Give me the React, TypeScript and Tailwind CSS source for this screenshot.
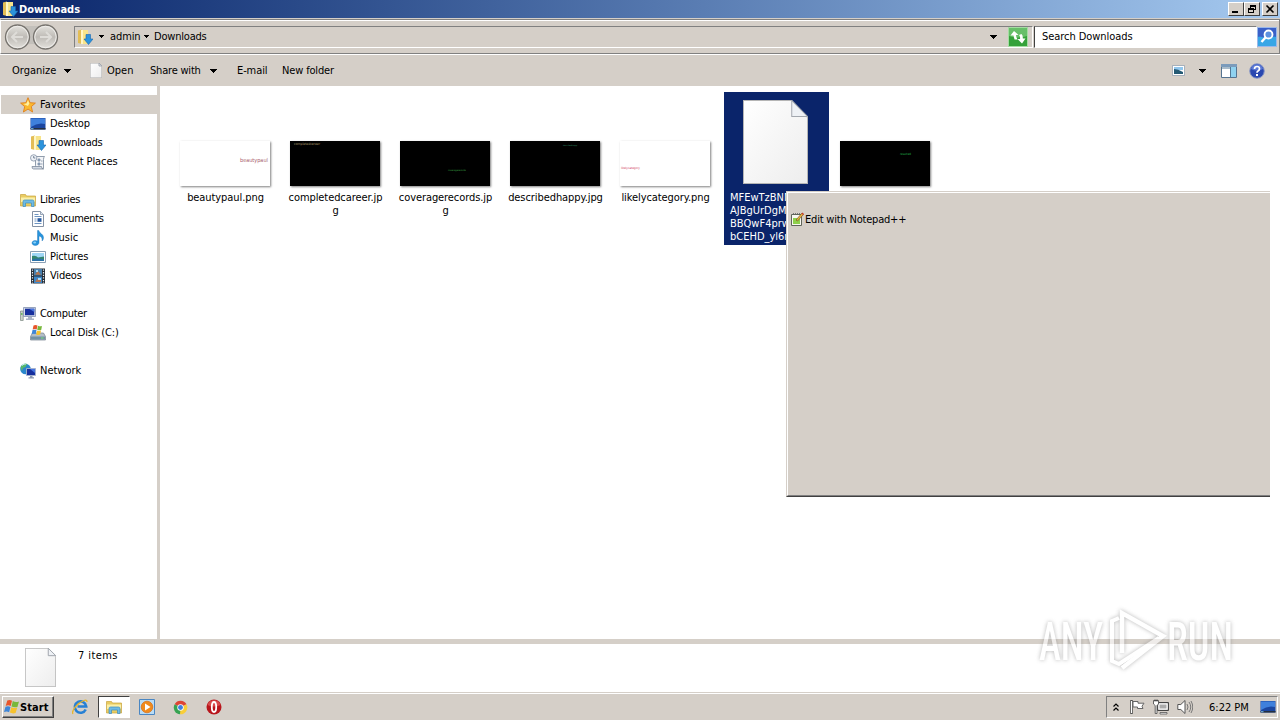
import type { ReactNode } from 'react';
import clsx from 'clsx';

interface IconProps {
  className?: string;
}

interface NavItem {
  label: string;
  icon: ReactNode;
  child?: boolean;
  selected?: boolean;
  textClass?: string;
}

interface FileItem {
  lines: string[];
  dark?: boolean;
  mark?: string;
  markClass?: string;
}

function DownloadsIcon({ className = 'size-4' }: IconProps) {
  return (
    <svg viewBox="0 0 16 16" className={className}>
      <path d="M1 1.500 5 .5V15l-4-1z" fill="#e3bd55" />
      <path d="M4 1h7v14H4z" fill="#f8e48a" />
      <path d="M4 1h2v14H4z" fill="#fdf6c8" />
      <path d="M9 5.500h4.500v4.500H16l-4.500 5.500L7 10h2z" fill="#2b93dc" stroke="#1667b0" strokeWidth=".6" />
    </svg>
  );
}

function FolderIcon({ className = 'size-4' }: IconProps) {
  return (
    <svg viewBox="0 0 16 16" className={className}>
      <path d="M.5 2.500h5l1 1.500h9v10H.5z" fill="#e9cc62" stroke="#c9a43e" strokeWidth=".7" />
      <path d="M1 5.500h14V10H1z" fill="#fbf0a8" />
      <path d="M3 14.500V9.500q0-1.500 1.500-1.500h8q1.500 0 1.500 1.500v5h-2.500V11h-6v3.500z" fill="#6fbbe4" stroke="#3c8cc0" strokeWidth=".7" />
    </svg>
  );
}

function StarIcon() {
  return (
    <svg viewBox="0 0 16 16" className="size-4">
      <path d="m8 .7 2.100 5 5.300.4-4.100 3.500 1.300 5.400L8 12.100 3.400 15l1.300-5.400L.6 6.100l5.300-.4z" fill="#fbb92f" stroke="#e0801c" strokeWidth=".9" />
      <path d="m8 3 1.300 3.500L8 9 3.500 7l3-.6z" fill="#fff0a0" />
    </svg>
  );
}

function DesktopIcon({ className = 'size-4' }: IconProps) {
  return (
    <svg viewBox="0 0 16 16" className={className}>
      <path d="M.5 2h15v11.500H.5z" fill="#1b46a0" />
      <path d="M1 2.500h14V8Q8 6 1 11z" fill="#3f80dc" />
      <path d="M.5 12h15v1.500H.5z" fill="#26303f" />
      <path d="M1 12.200h2.500v1H1z" fill="#7ac0f0" />
    </svg>
  );
}

function RecentIcon() {
  return (
    <svg viewBox="0 0 16 16" className="size-4">
      <path d="M5.500 2.500h9q-1 1-1 3v9H4q1.500-.8 1.500-3z" fill="#f3f5f8" stroke="#8592a3" strokeWidth=".9" />
      <path d="M2 12.500h9.500q0 2.500 2 2.500H3.500Q2 15 2 12.500z" fill="#d3dae3" stroke="#7d8a9c" strokeWidth=".8" />
      <path d="M8 5h2v2H8zm3 2h1.500M8 9h2v2H8zM11 10h1.500" fill="#a8bcd4" stroke="#6b7f98" strokeWidth=".7" />
      <circle cx="3.700" cy="3.900" r="3.200" fill="#eef2f7" stroke="#8d9aab" strokeWidth=".9" />
      <path d="M3.700 2v2h1.600" fill="none" stroke="#596a80" strokeWidth=".8" />
    </svg>
  );
}

function DocumentIcon() {
  return (
    <svg viewBox="0 0 16 16" className="size-4">
      <path d="M2.500.5h8l3 3v12h-11z" fill="#fff" stroke="#8391a5" />
      <path d="M10.500.5v3h3" fill="#dce5ef" stroke="#8391a5" strokeWidth=".8" />
      <path d="M4.500 3.500h4M4.500 5.500h7M4.500 12.500h7M4.500 8h2m-2 2h2" stroke="#6e95c2" />
      <path d="M7.500 7.200h4v3.600h-4z" fill="#285aa0" />
    </svg>
  );
}

function MusicIcon() {
  return (
    <svg viewBox="0 0 16 16" className="size-4">
      <path d="M7.500.5h1.300c.5 3 4.700 3.500 4.700 7 0 1.500-.5 2.700-1.500 3.500.7-3-1-4.500-3-5v6.500c0 1.800-1.700 3-3.700 3-1.800 0-3.300-1-3.300-2.500S3.500 10.500 5 10.500c1 0 1.700.2 2.500.6z" fill="#2794dc" stroke="#1a72b8" strokeWidth=".4" />
      <ellipse cx="4.700" cy="12.500" rx="1.500" ry=".9" fill="#8ad0f8" />
    </svg>
  );
}

function PictureIcon({ className = 'size-4' }: IconProps) {
  return (
    <svg viewBox="0 0 16 16" className={className}>
      <path d="M.5 2.500h15v11H.5z" fill="#fff" stroke="#8ba0b5" />
      <path d="M2 4h12v8H2z" fill="#9fd6f5" />
      <path d="M2 7q4-1 6 1.500L14 7.500V12H2z" fill="#33856f" />
      <path d="M2 10.500q6-2 12 0V12H2z" fill="#2a71a8" />
    </svg>
  );
}

function VideoIcon() {
  return (
    <svg viewBox="0 0 16 16" className="size-4">
      <path d="M1 .5h14v15H1z" fill="#242c35" />
      <path d="M4 1h8v6.500H4z" fill="#477fae" />
      <path d="M4 8.500h8V15H4z" fill="#3a85c8" />
      <path d="M5 6.500 8 3l3 4zM5 14l3-4 3 2v2z" fill="#b5754e" />
      <path d="M6 2h2v2H6zm2 8h3v2H8z" fill="#a9d8f4" />
      <path d="M2.500 1.500v14M13.500 1.500v14" stroke="#e4eaf0" strokeWidth="1.200" strokeDasharray="1.300 1.300" />
    </svg>
  );
}

function ComputerIcon() {
  return (
    <svg viewBox="0 0 16 16" className="size-4">
      <path d="M.5 5h2.700v9.500H.5z" fill="#cbd2cc" stroke="#7d8a83" strokeWidth=".7" />
      <path d="M1.200 7h1.200v2H1.200z" fill="#58b450" />
      <path d="M3.500 1.500h12v9h-12z" fill="#d4dae8" stroke="#8290ae" strokeWidth=".8" />
      <path d="M5 2.700h9.300v6.500H5z" fill="#162f9e" />
      <path d="M9 2.700h5.300V6z" fill="#4976dd" />
      <path d="M8 11h4v1.500h2V14H6v-1.500h2z" fill="#aab4c8" />
    </svg>
  );
}

function WindowsFlag({ className = 'size-4' }: IconProps) {
  return (
    <svg viewBox="0 0 16 16" className={className}>
      <path d="M3.300 1.500Q5.700.2 8 1.700L6.700 7Q4.300 5.700 1.700 6.900z" fill="#e8552b" />
      <path d="M8.800 2q2.700 1.800 6.200.5l-1.600 5.400q-2.800 1-5.900-.4z" fill="#78b83c" />
      <path d="M1.500 7.700q2.700-1.100 5 .2l-1.400 5.300q-2.300-1.300-5.100-.2z" fill="#3e86d8" />
      <path d="M7.300 8.300q2.800 1.400 5.900.4l-1.600 5.300q-2.800 1-5.700-.4z" fill="#f6c22e" />
    </svg>
  );
}

function DiskIcon() {
  return (
    <svg viewBox="0 0 16 16" className="size-4">
      <path d="M2.500 8h11l2 3.500v3.500H.5v-3.500z" fill="#b3bdc8" stroke="#74808c" strokeWidth=".7" />
      <path d="M1 11.500h14v3H1z" fill="#7391a4" />
      <path d="M11 12.500h2.500v1H11z" fill="#79e070" />
      <path d="M3.500.5q2-1 4 0l-.8 4q-2-.8-4 0z" fill="#e8552b" />
      <path d="M8 .8q2 1 4 .2l-.8 4q-2 .8-4-.2z" fill="#78b83c" />
      <path d="M2.500 5.100q2-.8 4 0l-.8 4q-2-.8-4 0z" fill="#3e86d8" />
      <path d="M7 5.400q2 1 4 .2l-.8 4q-2 .8-4-.2z" fill="#f6c22e" />
    </svg>
  );
}

function NetworkIcon() {
  return (
    <svg viewBox="0 0 16 16" className="size-4">
      <circle cx="5.500" cy="6" r="5.300" fill="#2a86cc" />
      <path d="M1.200 3q3-3.500 6-2L5.500 4 3 5 2 8Q0 5 1.200 3zM6 7l3-1v4l-3 1z" fill="#58b86a" />
      <path d="M2 2.500q2-2 4-1.500" stroke="#c8ecf6" fill="none" />
      <path d="M6.500 5.500h9v7h-9z" fill="#162f9e" stroke="#a8b4ce" strokeWidth=".9" />
      <path d="M10 6h5v4z" fill="#4474e0" />
      <path d="M10 13h2.500v1.200H14v1.300H8.500v-1.300H10z" fill="#8d9ab2" />
    </svg>
  );
}

function PageIcon({ className }: IconProps) {
  return (
    <svg viewBox="0 0 66 84" preserveAspectRatio="none" className={className}>
      <defs>
        <linearGradient id="page" x1="0" y1="0" x2="1" y2="1">
          <stop offset="0" stopColor="#ffffff" />
          <stop offset="1" stopColor="#ededed" />
        </linearGradient>
      </defs>
      <path d="M.5.500h49l16 17v66H.5z" fill="url(#page)" stroke="#b5b5b5" vectorEffect="non-scaling-stroke" />
      <path d="M49.500.500v16h16z" fill="#eef1f5" stroke="#a2a7ae" vectorEffect="non-scaling-stroke" />
    </svg>
  );
}

function Caret({ className }: IconProps) {
  return (
    <svg viewBox="0 0 7 4" shapeRendering="crispEdges" className={clsx('h-1 w-[7px] shrink-0', className)}>
      <path d="M0 0h7L3.500 4z" fill="#000" />
    </svg>
  );
}

function SmallCaret({ className }: IconProps) {
  return (
    <svg viewBox="0 0 5 3" shapeRendering="crispEdges" className={clsx('h-[3px] w-[5px] shrink-0', className)}>
      <path d="M0 0h5L2.500 3z" fill="#000" />
    </svg>
  );
}

function WindowButton({ children }: { children: ReactNode }) {
  return (
    <div className="flex h-[14px] w-4 items-center justify-center border border-t-white border-r-[#404040] border-b-[#404040] border-l-white bg-[#d5cfc8]">
      {children}
    </div>
  );
}

function TitleBar() {
  return (
    <div className="flex h-[18px] items-center bg-gradient-to-r from-[#0a246a] to-[#a6caf0] pr-[2px] pl-[2px] text-white">
      <DownloadsIcon />
      <span className="ml-px flex-1 pt-px font-bold">Downloads</span>
      <WindowButton>
        <svg viewBox="0 0 12 10" className="h-[10px] w-3"><path d="M2 7h6v2H2z" /></svg>
      </WindowButton>
      <WindowButton>
        <svg viewBox="0 0 12 10" shapeRendering="crispEdges" className="h-[10px] w-3">
          <path d="M4 1h6v5H8V5h1V3H5v1H4zM2 4h6v5H2zm1 2v2h4V6z" fillRule="evenodd" />
        </svg>
      </WindowButton>
      <div className="ml-[2px]">
        <WindowButton>
          <svg viewBox="0 0 12 10" className="h-[10px] w-3">
            <path d="m2.500 1.500 7 7m0-7-7 7" stroke="#000" strokeWidth="1.600" />
          </svg>
        </WindowButton>
      </div>
    </div>
  );
}

function NavButtons() {
  return (
    <svg viewBox="0 0 56 28" className="h-7 w-14 shrink-0">
      <defs>
        <linearGradient id="round" x1="0" y1="0" x2="0" y2="1">
          <stop offset="0" stopColor="#e6e4e0" />
          <stop offset=".5" stopColor="#bebbb6" />
          <stop offset="1" stopColor="#e4e2dd" />
        </linearGradient>
      </defs>
      <path d="M13 3h29v20q-14-4-29 0z" fill="#c3c0bb" />
      <circle cx="13.500" cy="14" r="12" fill="url(#round)" stroke="#77746f" strokeWidth="1.300" />
      <circle cx="13.500" cy="14" r="10.700" fill="none" stroke="#efedea" />
      <circle cx="41.500" cy="14" r="12" fill="url(#round)" stroke="#77746f" strokeWidth="1.300" />
      <circle cx="41.500" cy="14" r="10.700" fill="none" stroke="#efedea" />
      <path d="M19 14H8m5-5-5 5 5 5M36 14h11m-5-5 5 5-5 5" fill="none" stroke="#dedcd8" strokeWidth="2" />
    </svg>
  );
}

function AddressBar() {
  return (
    <div className="mt-px flex h-[35px] items-center border border-t-[#808080] border-r-[#808080] border-b-[#808080] border-l-white pl-[3px] shadow-[inset_0_1px_#fff]">
      <NavButtons />
      <div className="ml-[14px] flex h-[22px] w-[959px] shrink-0 items-center border border-t-[#808080] border-r-white border-b-white border-l-[#808080] pl-[2px]">
        <DownloadsIcon />
        <SmallCaret className="ml-[6px]" />
        <span className="ml-[6px] w-[28px] tracking-[-0.1px] whitespace-nowrap">admin</span>
        <SmallCaret className="ml-[6px]" />
        <span className="ml-[5px] flex-1 tracking-[-0.2px]">Downloads</span>
        <Caret className="mr-[35px]" />
      </div>
      <svg viewBox="0 0 20 20" className="-ml-[25px] size-5 shrink-0">
        <path d="M.5.500h19v19H.5z" fill="#35a23a" stroke="#a4dda2" />
        <path d="M1 1h18v8q-9 3-18 0z" fill="#67bf69" />
        <path d="M6.500 12.500 5.500 8.500H2.500L6 4l4.500 4H8q0 2.500 1.500 4.500zM14 16.500l3.500-5h-2.700q.2-3-1.300-4.500l-2.500 1q1.500 1.500 1 4H9.500z" fill="#fff" />
      </svg>
      <div className="ml-[6px] flex h-[22px] w-[223px] shrink-0 items-center border border-t-[#808080] border-r-white border-b-white border-l-[#404040] bg-white pl-[7px] tracking-[-0.06px]">
        Search Downloads
      </div>
      <svg viewBox="0 0 20 20" className="size-5 shrink-0">
        <path d="M.5.500h19v19H.5z" fill="#2b6cd0" stroke="#9ab8ea" />
        <path d="M1 10q9-4 18 0v9H1z" fill="#38a6e6" />
        <path d="M1 1h18v8q-9 3-18 0z" fill="#3a60c8" />
        <circle cx="11.500" cy="7.500" r="4" fill="#5c90e0" stroke="#fff" strokeWidth="1.800" />
        <path d="m8.500 10.500-4 4.500" stroke="#fff" strokeWidth="2.400" />
      </svg>
    </div>
  );
}

function CommandBar() {
  return (
    <div className="flex h-8 items-center border-t border-white pl-3 whitespace-nowrap">
      <span className="w-[44px]">Organize</span>
      <Caret className="ml-2" />
      <PageIcon className="ml-[19px] h-[15px] w-3" />
      <span className="ml-[5px] w-[27px]">Open</span>
      <span className="ml-4 w-[52px] tracking-[-0.2px]">Share with</span>
      <Caret className="ml-2" />
      <span className="ml-5 w-[30px] tracking-[-0.1px]">E-mail</span>
      <span className="ml-[15px] flex-1 tracking-[-0.15px]">New folder</span>
      <svg viewBox="0 0 13 11" className="h-[11px] w-[13px]">
        <path d="M.5.500h12v10H.5z" fill="#fff" stroke="#8a9aaa" strokeWidth=".7" />
        <path d="M2 2h9v3H2z" fill="#92c7ee" />
        <path d="M2 4q4 0 9 3v2H2z" fill="#245a74" />
      </svg>
      <Caret className="ml-[14px]" />
      <svg viewBox="0 0 16 14" className="ml-[15px] h-[14px] w-4">
        <path d="M.5.500h15v13H.5z" fill="#fff" stroke="#557390" />
        <path d="M0 0h16v3H0z" fill="#7b9bbb" />
        <path d="M10 3h5v10h-5z" fill="#8fd2f0" />
        <path d="M9.500 3v11M1 4h8" stroke="#527895" />
      </svg>
      <svg viewBox="0 0 16 16" className="mr-[15px] ml-3 size-4">
        <circle cx="8" cy="8" r="7.300" fill="#2947b0" stroke="#8c9ac6" />
        <path d="M2 6a6.200 6.200 0 0 1 12 0q-6 3-12 0z" fill="#5b78d4" />
        <path d="M5.500 6q0-2.500 2.500-2.500t2.500 2.200Q10.500 7 9 8q-1 .6-1 1.800" fill="none" stroke="#fff" strokeWidth="1.700" />
        <path d="M7 11h2v2H7z" fill="#fff" />
      </svg>
    </div>
  );
}

const NAV_GROUPS: NavItem[][] = [
  [
    { label: 'Favorites', icon: <StarIcon />, selected: true, textClass: 'tracking-[0.1px]' },
    { label: 'Desktop', icon: <DesktopIcon />, child: true, textClass: 'tracking-[-0.15px]' },
    { label: 'Downloads', icon: <DownloadsIcon />, child: true, textClass: 'tracking-[-0.2px]' },
    { label: 'Recent Places', icon: <RecentIcon />, child: true, textClass: 'tracking-[-0.1px]' },
  ],
  [
    { label: 'Libraries', icon: <FolderIcon />, textClass: 'tracking-[-0.3px]' },
    { label: 'Documents', icon: <DocumentIcon />, child: true, textClass: 'tracking-[-0.3px]' },
    { label: 'Music', icon: <MusicIcon />, child: true },
    { label: 'Pictures', icon: <PictureIcon />, child: true, textClass: 'tracking-[-0.1px]' },
    { label: 'Videos', icon: <VideoIcon />, child: true, textClass: 'tracking-[-0.2px]' },
  ],
  [
    { label: 'Computer', icon: <ComputerIcon />, textClass: 'tracking-[-0.3px]' },
    { label: 'Local Disk (C:)', icon: <DiskIcon />, child: true, textClass: 'tracking-[-0.17px]' },
  ],
  [{ label: 'Network', icon: <NetworkIcon /> }],
];

function Sidebar() {
  return (
    <div className="flex w-[160px] shrink-0 flex-col gap-[19px] border-r-[3px] border-[#d5cfc8] bg-white pt-[9px] pl-px">
      {NAV_GROUPS.map((group, i) => (
        <div key={i}>
          {group.map((item) => (
            <div
              key={item.label}
              className={clsx(
                'flex h-[19px] items-center gap-1',
                item.child ? 'pl-[29px]' : 'pl-[19px]',
                item.selected && 'bg-[#d5cfc8]',
              )}
            >
              {item.icon}
              <span className={clsx('pt-px', item.textClass)}>{item.label}</span>
            </div>
          ))}
        </div>
      ))}
    </div>
  );
}

const FILES: FileItem[] = [
  { lines: ['beautypaul.png'], mark: 'beautypaul', markClass: 'left-[60px] top-[15px] text-[5.5px] text-[#a8606c]' },
  { lines: ['completedcareer.jp', 'g'], dark: true, mark: 'completedcareer', markClass: 'left-[4px] -top-px text-[3.4px] text-[#a89868]' },
  { lines: ['coveragerecords.jp', 'g'], dark: true, mark: 'coveragerecords', markClass: 'left-[48px] top-[26px] text-[2.4px] text-[#3fae4a]' },
  { lines: ['describedhappy.jpg'], dark: true, mark: 'describedhappy', markClass: 'left-[53px] top-0 text-[2px] text-[#2f8a62]' },
  { lines: ['likelycategory.png'], mark: 'likelycategory', markClass: 'left-[1px] top-[23px] text-[3px] text-[#d03a5a]' },
];

function Thumbnail({ dark, mark, markClass }: Omit<FileItem, 'lines'>) {
  return (
    <div
      className={clsx(
        'relative mt-[49px] mb-[5px] h-[45px] w-[90px] shrink-0 overflow-hidden shadow-[1px_1px_2px_rgba(0,0,0,0.5)]',
        dark ? 'bg-black' : 'bg-white',
      )}
    >
      <span className={clsx('absolute leading-[8px] whitespace-nowrap', markClass)}>{mark}</span>
    </div>
  );
}

function FileGrid() {
  return (
    <div className="flex flex-1 items-start gap-[5px] bg-white pt-[6px] pl-[14px]">
      {FILES.map((file) => (
        <div key={file.lines[0]} className="flex w-[105px] shrink-0 flex-col items-center pr-[3px] leading-[13px]">
          <Thumbnail dark={file.dark} mark={file.mark} markClass={file.markClass} />
          {file.lines.map((line) => (
            <span key={line} className="pl-px tracking-[-0.08px] whitespace-nowrap">{line}</span>
          ))}
        </div>
      ))}
      <div className="flex h-[153px] w-[105px] shrink-0 flex-col bg-[#0a246a] pt-2 leading-[13px] text-white">
        <PageIcon className="mb-[7px] ml-[19px] h-[84px] w-[65px] shrink-0" />
        {['MFEwTzBNME', 'AJBgUrDgMCG', 'BBQwF4prw9S', 'bCEHD_yl6n'].map((line) => (
          <span key={line} className="pl-[6px] whitespace-nowrap">{line}</span>
        ))}
      </div>
      <div className="flex w-[105px] shrink-0 flex-col items-center pr-[3px]">
        <Thumbnail dark mark="resulted" markClass="left-[60px] top-[9px] text-[3px] text-[#22b04a]" />
      </div>
    </div>
  );
}

function ContextMenu() {
  return (
    <div className="absolute top-[191px] left-[786px] h-[306px] w-[484px] border-t border-b border-l border-t-[#d5cfc8] border-b-[#404040] border-l-[#d5cfc8] bg-[#d5cfc8]">
      <div className="h-full border-t border-b border-l border-t-white border-b-[#808080] border-l-white pt-[18px] pl-[3px]">
        <div className="flex h-4 items-center">
          <svg viewBox="0 0 13 14" className="h-[14px] w-[13px]">
            <path d="M.5 2.500h10v11H.5z" fill="#f8f8f0" stroke="#60655a" />
            <path d="M2 6h7v6H2z" fill="#8ed04a" />
            <path d="M2 1.500h8" stroke="#777" strokeDasharray="1 1" />
            <path d="m5 8 6-7 1.500 1.500-6 6.500z" fill="#e8b040" stroke="#6b4a1c" strokeWidth=".6" />
            <path d="m10.500 1.500 1-1L13 2l-1 1z" fill="#c8382c" />
          </svg>
          <span className="ml-px pt-px tracking-[-0.2px]">Edit with Notepad++</span>
        </div>
      </div>
    </div>
  );
}

function TaskButton({ children, active }: { children: ReactNode; active?: boolean }) {
  return (
    <div
      className={clsx(
        'flex h-[22px] w-8 items-center justify-center',
        active && 'border border-t-[#404040] border-r-white border-b-white border-l-[#404040] bg-white',
      )}
    >
      {children}
    </div>
  );
}

function Taskbar() {
  return (
    <div className="flex h-[27px] items-center border-t border-white bg-[#d5cfc8] pr-[2px] pl-[2px]">
      <div className="flex h-[22px] w-[52px] items-center border border-t-white border-r-[#404040] border-b-[#404040] border-l-white shadow-[inset_-1px_-1px_#808080]">
        <WindowsFlag className="ml-px size-4" />
        <span className="pt-px font-bold tracking-[0.1px]">Start</span>
      </div>
      <div className="ml-[10px] flex flex-1 gap-[1.6px]">
        <TaskButton>
          <svg viewBox="0 0 16 16" className="size-4">
            <path d="M13.700 10.500a5.700 5.700 0 1 1 .5-3H5.500" fill="none" stroke="#2680d4" strokeWidth="2.600" />
            <path d="M1 15C-1 12 5 4 12 1.500q3-1 3 1.500" fill="none" stroke="#e7b52d" strokeWidth="1.300" />
          </svg>
        </TaskButton>
        <TaskButton active><FolderIcon /></TaskButton>
        <TaskButton>
          <svg viewBox="0 0 16 16" className="size-4">
            <path d="M.5.500h15v15H.5z" fill="#b9dcf5" stroke="#4a86c2" />
            <circle cx="8" cy="8" r="5.800" fill="#f08a1c" stroke="#d86c10" strokeWidth=".7" />
            <path d="M6 4.500v7L11.500 8z" fill="#fff" />
          </svg>
        </TaskButton>
        <TaskButton>
          <svg viewBox="0 0 16 16" className="size-[15px]">
            <path d="M8 8 1.800 4.400A7.200 7.200 0 0 1 14.400 4.600z" fill="#de4434" />
            <path d="M8 8 1.800 4.400A7.200 7.200 0 0 0 7.500 15.200L10 10z" fill="#37a352" />
            <path d="M8 8l6.400-3.400A7.200 7.200 0 0 1 7.500 15.200z" fill="#f9ce38" />
            <circle cx="8" cy="8" r="3.400" fill="#fff" />
            <circle cx="8" cy="8" r="2.600" fill="#3f7fe0" />
          </svg>
        </TaskButton>
        <TaskButton>
          <svg viewBox="0 0 16 16" className="size-4">
            <circle cx="8" cy="8" r="7.500" fill="#b8161c" />
            <path d="M1.500 6a6.800 6.800 0 0 1 13 0q-6.500 3-13 0z" fill="#d94b4b" />
            <ellipse cx="8" cy="8" rx="2.200" ry="5" fill="none" stroke="#fff" strokeWidth="1.800" />
          </svg>
        </TaskButton>
      </div>
      <div className="flex h-[22px] w-[172px] items-center border border-t-[#808080] border-r-white border-b-white border-l-[#808080] pl-[6px]">
        <svg viewBox="0 0 6 8" className="h-2 w-[6px]">
          <path d="m.5 3.500 2.500-2.500 2.500 2.500m-5 4L3 5l2.500 2.500" fill="none" stroke="#000" strokeWidth="1.200" />
        </svg>
        <svg viewBox="0 0 16 16" className="ml-[10px] size-4">
          <path d="M2.500 1v14" stroke="#555" strokeWidth="2.600" />
          <path d="M2.500 2v12" stroke="#fff" />
          <path d="M4 2.500h5v1.700h6l-2 3 1 2.300H8.500V8H4z" fill="#fff" stroke="#666" />
        </svg>
        <svg viewBox="0 0 16 16" className="ml-2 size-4">
          <path d="M4.500 3.500h11v8h-11z" fill="#c4c4c4" stroke="#444" />
          <path d="M6 5h8v5H6z" fill="#aaa" stroke="#fff" />
          <path d="M7 13.500h7v1.500H7z" fill="#fff" stroke="#555" strokeWidth=".8" />
          <path d="M.5 1.500h5V5L4 6.500v8H2.200v-8L.5 5z" fill="#fff" stroke="#555" strokeWidth=".9" />
          <path d="M2 .5v2m2-2v2" stroke="#333" />
        </svg>
        <svg viewBox="0 0 16 16" className="ml-2 size-4">
          <path d="M.8 5.500h3L8 1.500v13L3.800 10.500h-3z" fill="#fff" stroke="#555" />
          <path d="M10 5q2 3 0 6m2-8q3.500 5 0 10m2-11q3.500 6 0 12" fill="none" stroke="#777" />
        </svg>
        <span className="ml-4 flex-1 pt-px whitespace-nowrap">6:22 PM</span>
        <DesktopIcon className="mr-px size-4" />
      </div>
    </div>
  );
}

function Watermark() {
  return (
    <svg
      viewBox="0 0 200 72"
      className="absolute top-[604px] left-[1036px] h-[72px] w-[200px] opacity-60 [filter:drop-shadow(0_0_2px_#888)]"
    >
      <g fill="#fff" fontFamily="Roboto" fontSize="54" fontWeight="500">
        <text x="3" y="56" textLength="64" lengthAdjust="spacingAndGlyphs">ANY</text>
        <text x="131" y="56" textLength="66" lengthAdjust="spacingAndGlyphs">RUN</text>
      </g>
      <path d="M83 14 76 17v40l7 3 40-26" fill="none" stroke="#fff" strokeWidth="4" />
      <path d="M86 49V9l41 23-41 32" fill="none" stroke="#fff" strokeWidth="4.500" />
    </svg>
  );
}

export default function App() {
  return (
    <div className="relative flex h-[720px] w-[1280px] flex-col overflow-hidden bg-[#d5cfc8] font-['DejaVu_Sans_Condensed','DejaVu_Sans',sans-serif] text-[11px] leading-4 font-stretch-condensed text-black">
      <TitleBar />
      <AddressBar />
      <CommandBar />
      <div className="flex h-[553px]">
        <Sidebar />
        <FileGrid />
      </div>
      <div className="mt-[5px] flex h-12 bg-white pt-1 pl-[25px]">
        <PageIcon className="h-[39px] w-[31px]" />
        <span className="ml-[22px] tracking-[0.4px]">7 items</span>
      </div>
      <div className="h-px bg-[#d5cfc8]" />
      <Taskbar />
      <ContextMenu />
      <Watermark />
    </div>
  );
}
